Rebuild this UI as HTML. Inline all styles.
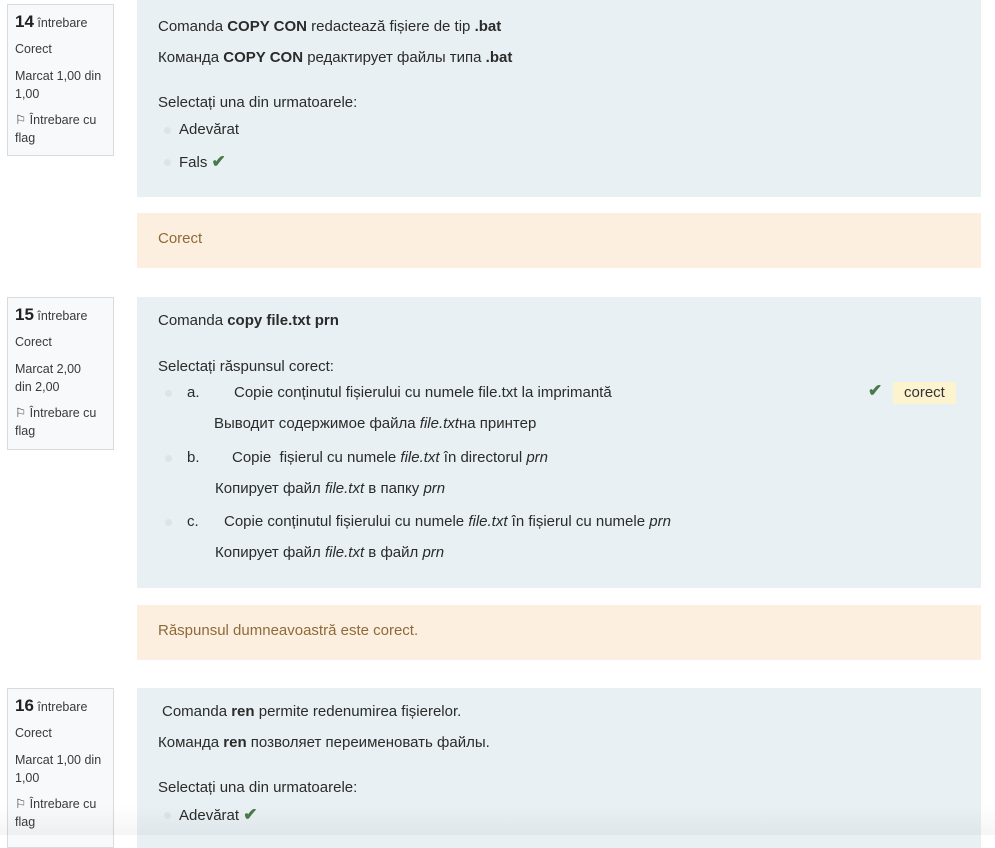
<!DOCTYPE html>
<html><head><meta charset="utf-8"><style>
body{margin:0;width:995px;height:835px;background:#fff;position:relative;overflow:hidden;font-family:"Liberation Sans",sans-serif;color:#2b2b2b}
.info{position:absolute;left:7px;width:107px;border:1px solid #d8dadc;background:#f8f9fa;font-size:12.5px;color:#3a3a3a;box-sizing:border-box;padding:6px 0 0 7px;line-height:18px}
.info .n{font-size:17px;font-weight:bold;color:#222}
.info p{margin:0}
.blue{position:absolute;left:137px;width:844px;background:#e8f0f3}
.or{position:absolute;left:137px;width:844px;background:#fcefdf;color:#8e6a38;font-size:15px}
.t{position:absolute;font-size:15px;white-space:nowrap;line-height:18px}
.nar{font-size:15px}
.r{position:absolute;width:7px;height:7px;border-radius:50%;background:#dde4e7}
.ck{color:#4a7a4a;font-size:17px;font-weight:bold}
</style></head><body>

<div class="info" style="top:4px;height:152px">
<p style="margin-top:2px"><span class="n">14</span> întrebare</p>
<p style="margin-top:8px">Corect</p>
<p style="margin-top:9px">Marcat 1,00 din<br>1,00</p>
<p style="margin-top:8px">⚐ Întrebare cu<br>flag</p>
</div>
<div class="blue" style="top:0;height:197px"></div>
<div class="t" style="left:158px;top:18px">Comanda <b>COPY CON</b> redactează fișiere de tip <b>.bat</b></div>
<div class="t" style="left:158px;top:49px">Команда <b>COPY CON</b> редактирует файлы типа <b>.bat</b></div>
<div class="t" style="left:158px;top:94px">Selectați una din urmatoarele:</div>
<div class="r" style="left:164px;top:127px"></div>
<div class="t" style="left:179px;top:121px">Adevărat</div>
<div class="r" style="left:164px;top:159px"></div>
<div class="t" style="left:179px;top:153px">Fals <span class="ck">✔</span></div>
<div class="or" style="top:213px;height:55px"><div style="padding:17px 0 0 21px">Corect</div></div>

<div class="info" style="top:297px;height:153px">
<p style="margin-top:2px"><span class="n">15</span> întrebare</p>
<p style="margin-top:8px">Corect</p>
<p style="margin-top:9px">Marcat 2,00<br>din 2,00</p>
<p style="margin-top:8px">⚐ Întrebare cu<br>flag</p>
</div>
<div class="blue" style="top:297px;height:291px"></div>
<div class="t" style="left:158px;top:312px">Comanda <b>copy file.txt prn</b></div>
<div class="t" style="left:158px;top:358px">Selectați răspunsul corect:</div>
<div class="r" style="left:165px;top:390px"></div>
<div class="t nar" style="left:187px;top:384px">a.</div>
<div class="t nar" style="left:234px;top:384px">Copie conținutul fișierului cu numele file.txt la imprimantă</div>
<div class="t" style="left:868px;top:382px"><span class="ck">✔</span></div>
<div class="t nar" style="left:893px;top:382px;background:#fcf3cf;padding:2px 11px;color:#333">corect</div>
<div class="t nar" style="left:214px;top:415px">Выводит содержимое файла <i>file.txt</i>на принтер</div>
<div class="r" style="left:165px;top:455px"></div>
<div class="t nar" style="left:187px;top:449px">b.</div>
<div class="t nar" style="left:232px;top:449px">Copie &nbsp;fișierul cu numele <i>file.txt</i> în directorul <i>prn</i></div>
<div class="t nar" style="left:215px;top:480px">Копирует файл <i>file.txt</i> в папку <i>prn</i></div>
<div class="r" style="left:165px;top:519px"></div>
<div class="t nar" style="left:187px;top:513px">c.</div>
<div class="t nar" style="left:224px;top:513px">Copie conținutul fișierului cu numele <i>file.txt</i> în fișierul cu numele <i>prn</i></div>
<div class="t nar" style="left:215px;top:544px">Копирует файл <i>file.txt</i> в файл <i>prn</i></div>
<div class="or" style="top:605px;height:55px"><div style="padding:17px 0 0 21px">Răspunsul dumneavoastră este corect.</div></div>

<div class="info" style="top:688px;height:160px">
<p style="margin-top:2px"><span class="n">16</span> întrebare</p>
<p style="margin-top:8px">Corect</p>
<p style="margin-top:9px">Marcat 1,00 din<br>1,00</p>
<p style="margin-top:8px">⚐ Întrebare cu<br>flag</p>
</div>
<div class="blue" style="top:688px;height:160px"></div>
<div class="t" style="left:162px;top:703px">Comanda <b>ren</b> permite redenumirea fișierelor.</div>
<div class="t" style="left:158px;top:734px">Команда <b>ren</b> позволяет переименовать файлы.</div>
<div class="t" style="left:158px;top:779px">Selectați una din urmatoarele:</div>
<div class="r" style="left:164px;top:812px"></div>
<div class="t" style="left:179px;top:806px">Adevărat <span class="ck">✔</span></div>
<div style="position:absolute;left:0;top:805px;width:995px;height:30px;background:linear-gradient(rgba(0,0,0,0),rgba(0,0,0,0.04))"></div>
</body></html>
